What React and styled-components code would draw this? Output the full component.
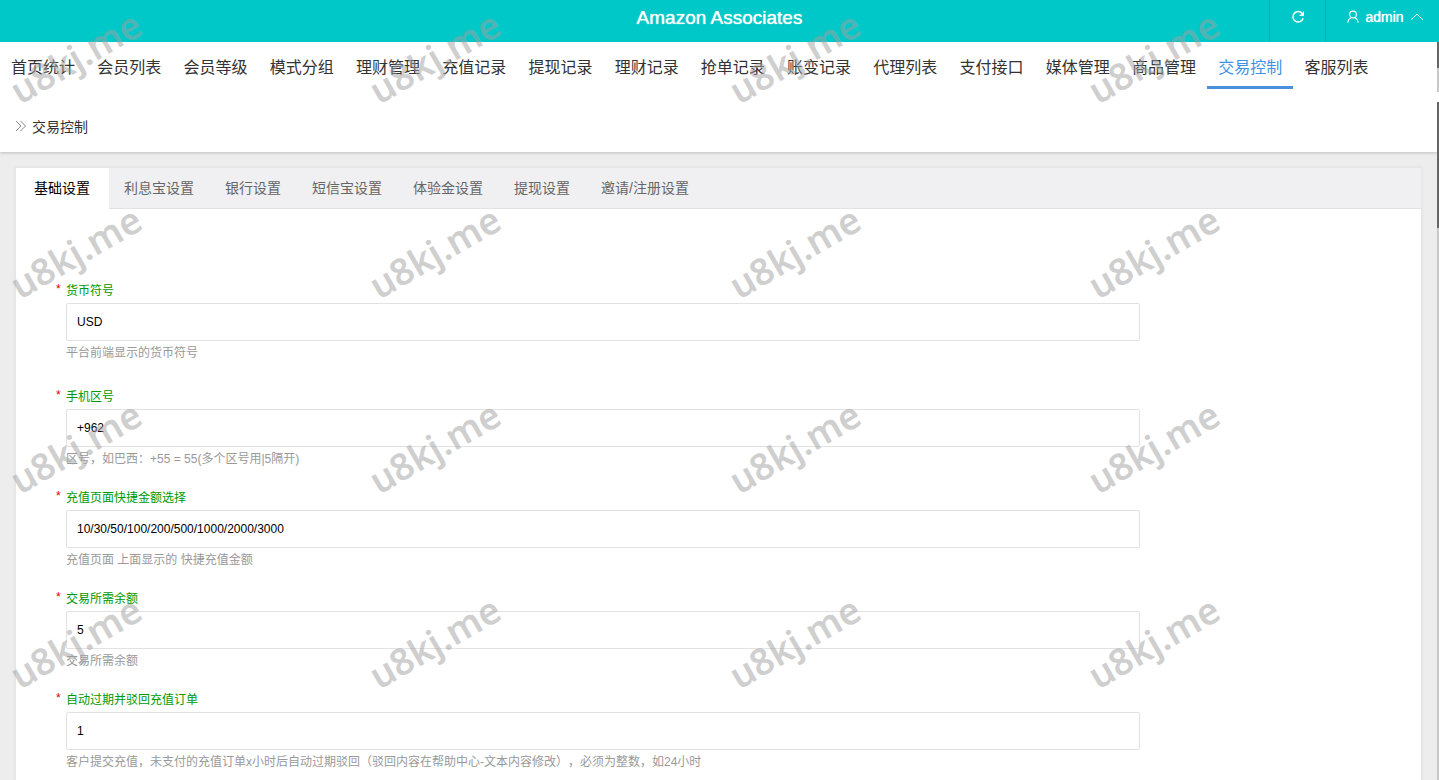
import React, { useState } from 'react';
import styled, { createGlobalStyle } from 'styled-components';

const GlobalStyle = createGlobalStyle`
  * {
    box-sizing: border-box;
  }

  body {
    margin: 0;
    color: #333;
    background-color: #ededee;
    font-family: "Liberation Sans", "Noto Sans CJK SC", sans-serif;
    font-size: 14px;
    text-spacing-trim: space-all;
  }

  button, input {
    font-family: inherit;
  }
`;

const Shell = styled.div`
  position: relative;
  height: 100vh;
  display: flex;
  flex-direction: column;
  overflow: hidden;
`;

const Header = styled.header`
  flex: none;
  height: 42px;
  display: grid;
  grid-template-columns: 1fr auto 1fr;
  background-color: #00c8c8;
  color: white;
`;

const Title = styled.h1`
  grid-column: 2;
  margin: 0;
  font-size: 19px;
  font-weight: 400;
  line-height: 35px;
  text-shadow: 0 0 1px white;
`;

const HeaderActions = styled.div`
  display: flex;
  justify-content: flex-end;
`;

const HeaderButton = styled.button`
  width: ${({ $wide }) => ($wide ? '114px' : '56px')};
  display: flex;
  align-items: center;
  justify-content: center;
  gap: 6px;
  padding: ${({ $wide }) => ($wide ? '0 0 8px 6px' : '0 0 8px')};
  border: none;
  border-left: 1px solid #00b0b3;
  background-color: transparent;
  color: white;
  font-size: 14px;
  text-shadow: 0 0 1px white;
  cursor: pointer;
`;

const NavBar = styled.div`
  flex: none;
  display: flex;
  height: 50px;
  background-color: white;
`;

const Nav = styled.nav`
  flex: 1;
  display: flex;
`;

const NavLink = styled.a`
  position: relative;
  width: 6%;
  height: 50px;
  color: ${({ $active }) => ($active ? '#3d91e6' : '#333')};
  font-size: 16px;
  line-height: 52px;
  text-align: center;
  text-decoration: none;
  white-space: nowrap;

  &::after {
    content: "";
    display: ${({ $active }) => ($active ? 'block' : 'none')};
    position: absolute;
    left: 0;
    right: 0;
    bottom: 3px;
    height: 3px;
    background-color: #4a90d9;
  }
`;

const Track = styled.div`
  flex: none;
  width: 2px;
  background-color: #c8c8c8;
`;

const Thumb = styled.div`
  height: ${({ $size }) => $size};
  background-color: #666;
`;

const Body = styled.div`
  flex: 1;
  min-height: 0;
  display: flex;
  border-top: 10px solid white;
`;

const Content = styled.main`
  flex: 1;
  min-width: 0;
  overflow: hidden;
`;

const Breadcrumb = styled.div`
  height: 50px;
  display: flex;
  align-items: center;
  gap: 5px;
  padding: 0 0 2px 15px;
  background-color: white;
  box-shadow: 0 1px 3px rgba(0, 0, 0, 0.2);
`;

const Card = styled.section`
  margin: 16px;
  background-color: white;
  box-shadow: 0 0 2px 2px rgba(0, 0, 0, 0.03);
`;

const TabList = styled.div`
  display: flex;
  height: 41px;
  border-bottom: 1px solid #e2e2e2;
  background-color: #f0f0f2;
`;

const Tab = styled.button`
  height: ${({ $active }) => ($active ? '41px' : '40px')};
  padding: ${({ $active }) => ($active ? '0 19px 2px 18px' : '0 16px 0 15px')};
  border: none;
  background-color: ${({ $active }) => ($active ? 'white' : 'transparent')};
  color: ${({ $active }) => ($active ? 'black' : '#666')};
  font-size: 14px;
  line-height: 38px;
  white-space: nowrap;
  cursor: pointer;
`;

const Form = styled.form`
  padding: 72px 20% 40px 40px;
  font-size: 12px;
`;

const Field = styled.div`
  margin-bottom: ${({ $spaced }) => ($spaced ? '23px' : '18px')};
`;

const Label = styled.label`
  display: flex;
  height: 22px;
  line-height: 20px;
  color: #090;
`;

const Required = styled.span`
  width: 10px;
  color: #d00;
  line-height: 16px;
`;

const Control = styled.div`
  padding-left: 10px;
`;

const Input = styled.input`
  display: block;
  width: 100%;
  height: 38px;
  padding: 0 10px;
  border: 1px solid #e2e2e2;
  border-radius: 2px;
  outline: none;
  background-color: white;
  color: black;
  font-size: 12px;
`;

const Hint = styled.p`
  margin: 0;
  padding-top: 2px;
  color: #999;
  line-height: 21px;
`;

const Watermarks = styled.div`
  position: absolute;
  inset: -41px 2px auto 0;
  display: grid;
  grid-template-columns: repeat(4, 1fr);
  grid-auto-rows: 195px;
  align-items: center;
  justify-items: start;
  pointer-events: none;
`;

const Mark = styled.span`
  margin-left: 3px;
  color: rgba(160, 160, 160, 0.5);
  font-family: "Noto Sans", sans-serif;
  font-size: 37px;
  font-weight: 600;
  transform: rotate(-30deg);
`;

const menus = [
  '首页统计', '会员列表', '会员等级', '模式分组', '理财管理', '充值记录', '提现记录', '理财记录',
  '抢单记录', '账变记录', '代理列表', '支付接口', '媒体管理', '商品管理', '交易控制', '客服列表',
];

const tabs = ['基础设置', '利息宝设置', '银行设置', '短信宝设置', '体验金设置', '提现设置', '邀请/注册设置'];

const fields = [
  { name: 'currency', label: '货币符号', value: 'USD', hint: '平台前端显示的货币符号', spaced: true },
  { name: 'areaCode', label: '手机区号', value: '+962', hint: '区号，如巴西：+55 = 55(多个区号用|5隔开)' },
  { name: 'amounts', label: '充值页面快捷金额选择', value: '10/30/50/100/200/500/1000/2000/3000', hint: '充值页面 上面显示的 快捷充值金额' },
  { name: 'balance', label: '交易所需余额', value: '5', hint: '交易所需余额' },
  { name: 'expire', label: '自动过期并驳回充值订单', value: '1', hint: '客户提交充值，未支付的充值订单x小时后自动过期驳回（驳回内容在帮助中心-文本内容修改），必须为整数，如24小时' },
];

const RefreshIcon = () => (
  <svg width="14" height="14" viewBox="0 0 14 14" fill="none">
    <path d="M11.2 3.6A5.2 5.2 0 1 0 12.1 8.3" stroke="currentColor" strokeWidth="1.5" />
    <path d="M13 1v5H8z" fill="currentColor" />
  </svg>
);

const UserIcon = () => (
  <svg width="12" height="14" viewBox="0 0 12 14" fill="none" stroke="currentColor" strokeWidth="1.1">
    <circle cx="6" cy="4.5" r="3.4" />
    <path d="M4.4 7.7C2.2 8.4 1 10.2.9 12.8M7.6 7.7c2.2.7 3.4 2.5 3.5 5.1" />
  </svg>
);

const UpIcon = () => (
  <svg width="14" height="14" viewBox="0 0 14 14" fill="none" stroke="currentColor">
    <path d="M1 9.8l6-5.6 6 5.6" />
  </svg>
);

const DoubleArrow = () => (
  <svg width="12" height="12" viewBox="0 0 12 12" fill="none" stroke="#888">
    <path d="M1 1l5 5-5 5M5.5 1l5 5-5 5" />
  </svg>
);

const App = () => {
  const [activeTab, setActiveTab] = useState(tabs[0]);
  const [values, setValues] = useState(
    Object.fromEntries(fields.map((field) => [field.name, field.value]))
  );

  const handleChange = (e) => {
    setValues({ ...values, [e.target.name]: e.target.value });
  };

  return (
    <Shell>
      <GlobalStyle />
      <Header>
        <Title>Amazon Associates</Title>
        <HeaderActions>
          <HeaderButton type="button" aria-label="刷新"><RefreshIcon /></HeaderButton>
          <HeaderButton type="button" $wide>
            <UserIcon />
            admin
            <UpIcon />
          </HeaderButton>
        </HeaderActions>
      </Header>

      <NavBar>
        <Nav>
          {menus.map((menu) => (
            <NavLink key={menu} href="#" $active={menu === '交易控制'}>{menu}</NavLink>
          ))}
        </Nav>
        <Track><Thumb $size="52%" /></Track>
      </NavBar>

      <Body>
        <Content>
          <Breadcrumb>
            <DoubleArrow />
            交易控制
          </Breadcrumb>
          <Card>
            <TabList role="tablist">
              {tabs.map((tab) => (
                <Tab
                  key={tab}
                  type="button"
                  role="tab"
                  aria-selected={tab === activeTab}
                  $active={tab === activeTab}
                  onClick={() => setActiveTab(tab)}
                >
                  {tab}
                </Tab>
              ))}
            </TabList>
            <Form>
              {fields.map((field) => (
                <Field key={field.name} $spaced={field.spaced}>
                  <Label htmlFor={field.name}>
                    <Required>*</Required>
                    {field.label}
                  </Label>
                  <Control>
                    <Input
                      id={field.name}
                      name={field.name}
                      value={values[field.name]}
                      onChange={handleChange}
                    />
                    <Hint>{field.hint}</Hint>
                  </Control>
                </Field>
              ))}
            </Form>
          </Card>
        </Content>
        <Track><Thumb $size="126px" /></Track>
      </Body>

      {/* watermark layer over the whole page */}
      <Watermarks aria-hidden="true">
        {Array.from({ length: 16 }, (_, i) => (
          <Mark key={i}>u8kj.me</Mark>
        ))}
      </Watermarks>
    </Shell>
  );
};

export default App;
